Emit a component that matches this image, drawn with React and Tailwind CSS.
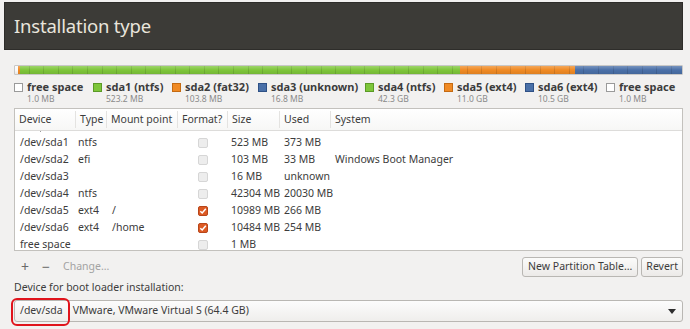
import React from "react";

const F = { fontFamily: "'Noto Sans', 'Open Sans', sans-serif" };

const segs = [
  { w: 3, c: "bg-[#fafafa]" },
  { w: 2, c: "bg-[#f08a24]" },
  { w: 440, c: "bg-[#7ec63a]" },
  { w: 115, c: "bg-[#f08a24]" },
  { w: 108, c: "bg-[#4a70a8]" },
  { w: 1, c: "bg-[#fafafa]" },
];

const legend = [
  { name: "free space", size: "1.0 MB", sq: "bg-white border-[#9a9a9a]", w: "w-[79px]" },
  { name: "sda1 (ntfs)", size: "523.2 MB", sq: "bg-[#7ec63a] border-[#5b9a26]", w: "w-[79px]" },
  { name: "sda2 (fat32)", size: "103.8 MB", sq: "bg-[#f08a24] border-[#c46a12]", w: "w-[86px]" },
  { name: "sda3 (unknown)", size: "16.8 MB", sq: "bg-[#4a70a8] border-[#2f5186]", w: "w-[107px]" },
  { name: "sda4 (ntfs)", size: "42.3 GB", sq: "bg-[#7ec63a] border-[#5b9a26]", w: "w-[79px]" },
  { name: "sda5 (ext4)", size: "11.0 GB", sq: "bg-[#f08a24] border-[#c46a12]", w: "w-[81px]" },
  { name: "sda6 (ext4)", size: "10.5 GB", sq: "bg-[#4a70a8] border-[#2f5186]", w: "w-[81px]" },
  { name: "free space", size: "1.0 MB", sq: "bg-white border-[#9a9a9a]", w: "w-[76px]" },
];

const rows = [
  ["/dev/sda1", "ntfs", "", false, "523 MB", "373 MB", ""],
  ["/dev/sda2", "efi", "", false, "103 MB", "33 MB", "Windows Boot Manager"],
  ["/dev/sda3", "", "", false, "16 MB", "unknown", ""],
  ["/dev/sda4", "ntfs", "", false, "42304 MB", "20030 MB", ""],
  ["/dev/sda5", "ext4", "/", true, "10989 MB", "266 MB", ""],
  ["/dev/sda6", "ext4", "/home", true, "10484 MB", "254 MB", ""],
  ["free space", "", "", false, "1 MB", "", ""],
];

const cols = "grid grid-cols-[61px_31px_71px_50px_52px_51px_1fr]";

function Check({ on }) {
  if (on)
    return (
      <div className="w-[10px] h-[10px] rounded-[2px] bg-[#dc5a24] border border-[#b8461a] flex items-center justify-center">
        <svg width="8" height="8" viewBox="0 0 8 8">
          <path d="M1.3 4.2 L3.2 6 L6.8 1.8" stroke="white" strokeWidth="1.5" fill="none" />
        </svg>
      </div>
    );
  return <div className="w-[10px] h-[10px] rounded-[2px] bg-[#ededed] border border-[#d6d6d6]" />;
}

export default function App() {
  return (
    <div className="w-[690px] h-[329px] bg-[#f2f1f0] text-[#3c3c3c] overflow-hidden" style={F}>
      <div className="pt-[2px] pl-[4px] pr-[7px]">
        <div className="h-[48px] bg-[#3c3b37] border border-[#2e2d2a] flex items-center pl-[9px]">
          <span className="text-[18.5px] text-[#e9e5dc] tracking-[-0.2px]">Installation type</span>
        </div>
      </div>

      <div className="pl-[14px] pr-[7px] pt-[15px]">
        <div className="relative h-[10px] flex border border-[#6a6a6a]/30 rounded-[1px] overflow-hidden">
          {segs.map((s, i) => (
            <div key={i} className={`${s.c} h-full shrink-0`} style={{ width: s.w }} />
          ))}
          <div className="absolute inset-0 bg-[repeating-linear-gradient(90deg,transparent_0,transparent_13.6px,rgba(0,0,0,0.12)_13.6px,rgba(0,0,0,0.12)_14.6px)]" />
          <div className="absolute inset-0 bg-[linear-gradient(180deg,rgba(255,255,255,0.25),rgba(255,255,255,0)_50%,rgba(0,0,0,0.08))]" />
        </div>

        <div className="flex mt-[5px]">
          {legend.map((l, i) => (
            <div key={i} className={`${l.w} shrink-0 flex`}>
              <div className={`w-[9px] h-[9px] mt-[3px] border ${l.sq} shrink-0`} />
              <div className="ml-[4px] flex flex-col">
                <span className="text-[11px] font-bold leading-[14px] text-[#3c3c3c] whitespace-nowrap">{l.name}</span>
                <span className="text-[8.5px] leading-[10px] text-[#8a8a8a] whitespace-nowrap">{l.size}</span>
              </div>
            </div>
          ))}
        </div>

        <div className="mt-[4px] h-[143px] bg-white border border-[#c3c1bd] overflow-hidden text-[10.5px]">
          <div className={`${cols} h-[22px] items-center bg-[linear-gradient(180deg,#ffffff,#f7f7f6)] border-b border-[#dddcda]`}>
            {["Device", "Type", "Mount point", "Format?", "Size", "Used", "System"].map((h, i) => (
              <div key={i} className={`h-[17px] flex items-center pl-[4px] whitespace-nowrap ${i < 6 ? "border-r border-[#e4e3e1]" : ""}`}>
                {h}
              </div>
            ))}
          </div>
          <div className="h-[3px] relative">
            <div className="absolute left-[25px] top-[0px] w-[1px] h-[1px] bg-[#9a9a9a]" />
          </div>
          {rows.map((r, i) => (
            <div key={i} className={`${cols} h-[17px] items-center whitespace-nowrap`}>
              <div className="pl-[5px]">{r[0]}</div>
              <div className="pl-[2px]">{r[1]}</div>
              <div className="pl-[5px]">{r[2]}</div>
              <div className="pl-[20px]"><Check on={r[3]} /></div>
              <div className="pl-[3px]">{r[4]}</div>
              <div className="pl-[4px]">{r[5]}</div>
              <div className="pl-[4px]">{r[6]}</div>
            </div>
          ))}
        </div>

        <div className="flex items-center h-[20px] mt-[6px] text-[10.5px]">
          <span className="ml-[7px] text-[14px] text-[#6a6a6a] leading-none">+</span>
          <span className="ml-[13px] text-[14px] text-[#6a6a6a] leading-none">−</span>
          <span className="ml-[13px] text-[#a3a3a3]">Change...</span>
          <div className="ml-auto flex gap-[3px]">
            <div className="h-[20px] px-[5px] flex items-center border border-[#b9b7b3] rounded-[3px] bg-[linear-gradient(180deg,#fbfbfa,#eceae8)]">New Partition Table...</div>
            <div className="h-[20px] px-[4px] flex items-center border border-[#b9b7b3] rounded-[3px] bg-[linear-gradient(180deg,#fbfbfa,#eceae8)]">Revert</div>
          </div>
        </div>

        <div className="mt-[2px] text-[10.5px] leading-[16px]">Device for boot loader installation:</div>

        <div className="relative mt-[5px] h-[22px] border border-[#b9b7b3] rounded-[3px] bg-[linear-gradient(180deg,#fcfcfc,#efeeec)] flex items-center text-[10.5px]">
          <span className="ml-[5px]">/dev/sda</span>
          <span className="ml-[10px]">VMware, VMware Virtual S (64.4 GB)</span>
          <svg className="ml-auto mr-[6px]" width="8" height="5" viewBox="0 0 8 5">
            <path d="M0 0 H8 L4 5 Z" fill="#2e2e2e" />
          </svg>
          <div className="absolute left-[-4px] top-[-3px] w-[59px] h-[28px] border-2 border-[#e0141c] rounded-[6px]" />
        </div>
      </div>
    </div>
  );
}
